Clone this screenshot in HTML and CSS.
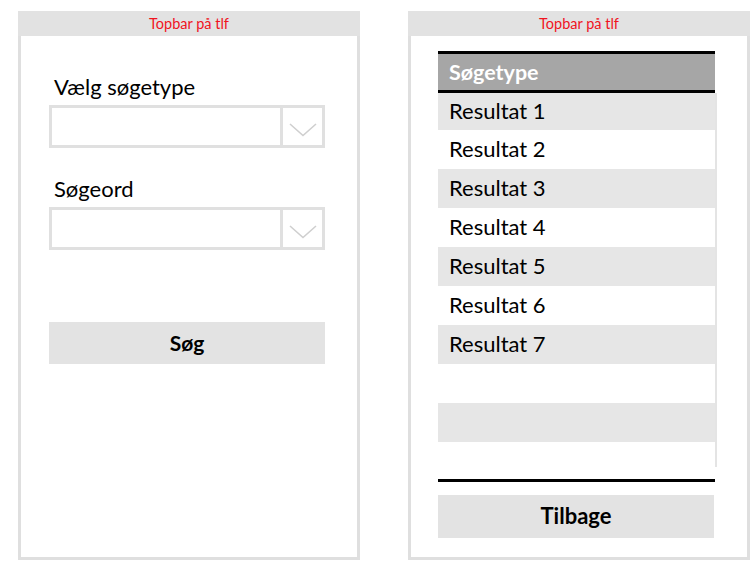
FILE: index.html
```html
<!DOCTYPE html>
<html lang="da">
<head>
<meta charset="utf-8">
<title>Mockup</title>
<link rel="stylesheet" href="styles.css">
</head>
<body>
<div class="screens">
  <section class="phone">
    <div class="topbar">Topbar på tlf</div>
    <div class="content search">
      <label class="label first">Vælg søgetype</label>
      <div class="dropdown">
        <div class="field"></div>
        <div class="arrow">
          <svg width="28" height="14" viewBox="0 0 28 14"><path d="M1 1 L14 12.5 L27 1" fill="none" stroke="#cfcfcf" stroke-width="1.6"/></svg>
        </div>
      </div>
      <label class="label">Søgeord</label>
      <div class="dropdown">
        <div class="field"></div>
        <div class="arrow">
          <svg width="28" height="14" viewBox="0 0 28 14"><path d="M1 1 L14 12.5 L27 1" fill="none" stroke="#cfcfcf" stroke-width="1.6"/></svg>
        </div>
      </div>
      <div class="button search-btn">Søg</div>
    </div>
  </section>
  <section class="phone">
    <div class="topbar">Topbar på tlf</div>
    <div class="content results">
      <div class="table-head">Søgetype</div>
      <div class="rows">
        <div class="row alt first-row">Resultat 1</div>
        <div class="row">Resultat 2</div>
        <div class="row alt">Resultat 3</div>
        <div class="row">Resultat 4</div>
        <div class="row alt">Resultat 5</div>
        <div class="row">Resultat 6</div>
        <div class="row alt">Resultat 7</div>
        <div class="row"></div>
        <div class="row alt"></div>
        <div class="row"></div>
      </div>
      <div class="rule"></div>
      <div class="button back-btn">Tilbage</div>
    </div>
  </section>
</div>
</body>
</html>
```

FILE: styles.css
```css
html, body {
  margin: 0;
  padding: 0;
  background: #ffffff;
}
body {
  font-family: Lato, "Open Sans", sans-serif;
  color: #000;
}
.screens {
  display: flex;
  gap: 48px;
  padding: 11px 0 0 18px;
}
.phone {
  width: 336px;
  height: 546px;
  border: 3px solid #dfdfdf;
  border-top: 0;
  background: #fff;
  display: flex;
  flex-direction: column;
}
.topbar {
  height: 25px;
  margin: 0 -3px;
  background: #e2e2e2;
  color: #f0141e;
  font-size: 14.5px;
  line-height: 25px;
  text-align: center;
}
.content {
  display: flex;
  flex-direction: column;
}
.search {
  padding: 0 32px 0 28px;
}
.label {
  display: block;
  font-size: 22px;
  line-height: 24px;
  padding-left: 5px;
  margin: 29px 0 6px;
}
.label.first {
  margin-top: 39px;
}
.dropdown {
  display: flex;
  height: 37px;
  border: 3px solid #e0e0e0;
}
.field {
  flex: 1;
  border-right: 3px solid #e0e0e0;
}
.arrow {
  width: 39px;
  display: flex;
  align-items: center;
  justify-content: center;
  padding-top: 6px;
  box-sizing: border-box;
}
.button {
  height: 42px;
  background: #e3e3e3;
  font-weight: bold;
  font-size: 21px;
  line-height: 41px;
  text-align: center;
}
.search-btn {
  margin-top: 72px;
}
.results {
  padding: 15px 0 0 27px;
  width: 279px;
}
.table-head {
  height: 36px;
  border-top: 3px solid #000;
  border-bottom: 3px solid #000;
  background: #a6a6a6;
  color: #fff;
  font-weight: bold;
  font-size: 21.5px;
  line-height: 36px;
  padding-left: 11px;
  width: 266px;
}
.rows {
  height: 374px;
  overflow: hidden;
  width: 277px;
  border-right: 2px solid #e4e4e4;
}
.row {
  height: 39px;
  line-height: 37px;
  font-size: 22px;
  padding-left: 11px;
  background: #fff;
}
.row.first-row {
  height: 37px;
  line-height: 35px;
}
.row.alt {
  background: #e6e6e6;
}
.rule {
  width: 277px;
  height: 3px;
  background: #000;
  margin-top: 12px;
}
.back-btn {
  width: 276px;
  margin-top: 13px;
  height: 43px;
  line-height: 42px;
  font-size: 22px;
}
```
